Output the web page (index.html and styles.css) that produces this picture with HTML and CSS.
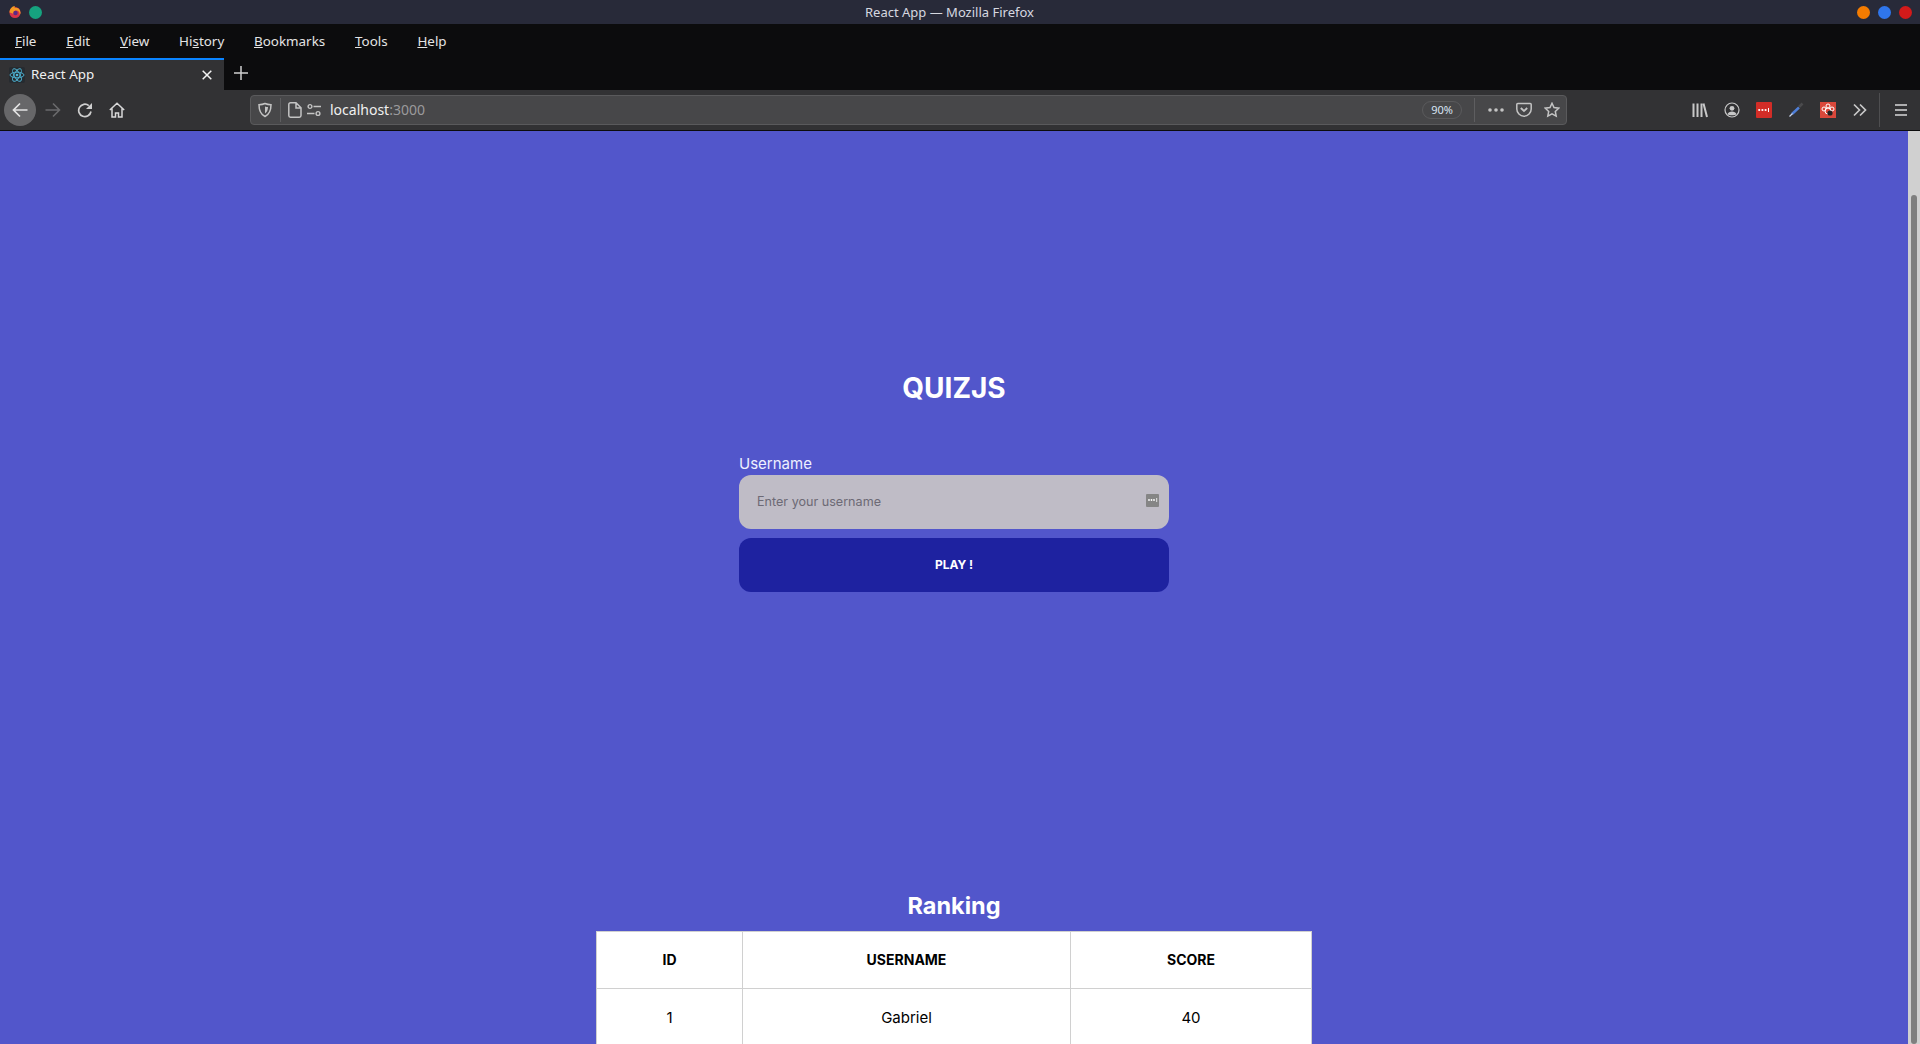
FILE: index.html
```html
<!DOCTYPE html>
<html lang="en">
<head>
    <meta charset="UTF-8">
    <title>React App — Mozilla Firefox</title>
    <link rel="stylesheet" href="styles.css">
</head>
<body>

    <!-- window title -->
    <div class="titlebar">
        <div class="title-left">
            <svg class="fx-logo" width="14" height="14" viewBox="0 0 14 14">
                <circle cx="7" cy="7.5" r="5.5" fill="#d8344a"/>
                <path d="M1.5 7.5C1.5 4 4 1 7 1c-.6 1-.5 1.6 0 2 2-.6 5 .6 5.5 4.5.1 1-.3 1.5-.8 2.2C12 6 9 5 7.5 5.5 6 6 5 7 5.5 8.5 3.5 8.5 2.5 7 1.5 7.5z" fill="#f59a23"/>
                <circle cx="7.5" cy="8" r="2.2" fill="#5b2a86"/>
            </svg>
            <span class="dot dot-green"></span>
        </div>
        <div class="title-text">React App — Mozilla Firefox</div>
        <div class="title-right">
            <span class="dot dot-orange"></span>
            <span class="dot dot-blue"></span>
            <span class="dot dot-red"></span>
        </div>
    </div>

    <!-- menu -->
    <nav class="menubar">
        <a><u>F</u>ile</a>
        <a><u>E</u>dit</a>
        <a><u>V</u>iew</a>
        <a>Hi<u>s</u>tory</a>
        <a><u>B</u>ookmarks</a>
        <a><u>T</u>ools</a>
        <a><u>H</u>elp</a>
    </nav>

    <!-- tabs -->
    <div class="tabstrip">
        <div class="tab">
            <span class="favicon">
                <svg width="16" height="16" viewBox="0 0 16 16" fill="none" stroke="#4fb6d6" stroke-width="0.9">
                    <ellipse cx="8" cy="8" rx="7" ry="2.8"/>
                    <ellipse cx="8" cy="8" rx="7" ry="2.8" transform="rotate(60 8 8)"/>
                    <ellipse cx="8" cy="8" rx="7" ry="2.8" transform="rotate(120 8 8)"/>
                    <circle cx="8" cy="8" r="1.3" fill="#4fb6d6" stroke="none"/>
                </svg>
            </span>
            <span class="tab-title">React App</span>
            <svg class="tab-close" width="10" height="10" viewBox="0 0 10 10" stroke="#f4f4f4" stroke-width="1.5">
                <path d="M.7.7l8.6 8.6M9.3.7L.7 9.3"/>
            </svg>
        </div>
        <svg class="new-tab" width="14" height="14" viewBox="0 0 14 14" stroke="#d0d0d0" stroke-width="1.5">
            <path d="M7 0v14M0 7h14"/>
        </svg>
    </div>

    <!-- toolbar -->
    <div class="toolbar">
        <div class="nav-btns">
            <button class="back-btn">
                <svg width="16" height="16" viewBox="0 0 16 16" fill="none" stroke="#e4e4e4" stroke-width="1.7">
                    <path d="M15.5 8H1.5M8 1.5L1.5 8 8 14.5"/>
                </svg>
            </button>
            <button class="plain-btn">
                <svg width="16" height="16" viewBox="0 0 16 16" fill="none" stroke="#6a6a6c" stroke-width="1.6">
                    <path d="M.5 8h14M8 1.5L14.5 8 8 14.5"/>
                </svg>
            </button>
            <button class="plain-btn">
                <svg width="16" height="16" viewBox="0 0 16 16" fill="none" stroke="#cfcfcf" stroke-width="1.7">
                    <path d="M14 9.5A6.2 6.2 0 1 1 11.8 3.6"/>
                    <path d="M15 1v6H9z" fill="#cfcfcf" stroke="none"/>
                </svg>
            </button>
            <button class="plain-btn">
                <svg width="16" height="16" viewBox="0 0 16 16" fill="none" stroke="#d8d8d8" stroke-width="1.5">
                    <path d="M.8 8L8 1.2 15.2 8M3 6.5V15h3.5v-4h3v4H13V6.5"/>
                </svg>
            </button>
        </div>

        <div class="urlbar">
            <svg class="url-shield" width="16" height="16" viewBox="0 0 16 16" fill="none" stroke="#c4c4c4" stroke-width="1.5">
                <path d="M8 1.5c2 .9 4 1.2 6 1.2 0 5.5-1.5 9.5-6 11.8C3.5 12.2 2 8.2 2 2.7c2 0 4-.3 6-1.2z"/>
                <path d="M8 4.5c1 .4 2 .6 3 .6-.1 3-1 5.2-3 6.5z" fill="#c4c4c4" stroke="none"/>
            </svg>
            <span class="url-sep"></span>
            <svg width="14" height="16" viewBox="0 0 14 16" fill="none" stroke="#c4c4c4" stroke-width="1.5">
                <path d="M2.5.8H8l5 5v7.7a1.7 1.7 0 0 1-1.7 1.7H2.5a1.7 1.7 0 0 1-1.7-1.7v-11A1.7 1.7 0 0 1 2.5.8zM8 1v5h5"/>
            </svg>
            <svg class="url-perm" width="14" height="14" viewBox="0 0 14 14" fill="none" stroke="#c4c4c4" stroke-width="1.4">
                <circle cx="3" cy="3.5" r="1.9"/>
                <path d="M6.5 3.5H14M0 10.5h7.5"/>
                <circle cx="11" cy="10.5" r="1.9"/>
            </svg>
            <span class="url-text">localhost<span class="url-port">:3000</span></span>
            <span class="url-zoom">90%</span>
            <span class="url-sep url-sep-right"></span>
            <svg class="url-action" width="16" height="16" viewBox="0 0 16 16" fill="#c4c4c4">
                <circle cx="2" cy="8" r="1.8"/>
                <circle cx="8" cy="8" r="1.8"/>
                <circle cx="14" cy="8" r="1.8"/>
            </svg>
            <svg class="url-action" width="16" height="16" viewBox="0 0 16 16" fill="none" stroke="#c4c4c4" stroke-width="1.5">
                <path d="M1.8 1.5h12.4a1 1 0 0 1 1 1V7a7.2 7.2 0 0 1-14.4 0V2.5a1 1 0 0 1 1-1z"/>
                <path d="M4.8 6L8 9l3.2-3" stroke-width="1.8"/>
            </svg>
            <svg class="url-action" width="16" height="16" viewBox="0 0 16 16" fill="none" stroke="#c4c4c4" stroke-width="1.5">
                <path d="M8 1.3l2 4.3 4.7.6-3.4 3.2.9 4.7L8 11.8l-4.2 2.3.9-4.7-3.400-3.200L6 5.600z"/>
            </svg>
        </div>

        <div class="tool-icons">
            <svg width="16" height="16" viewBox="0 0 16 16" fill="none" stroke="#c8c8c8" stroke-width="2">
                <path d="M1.5 1.5V15M5.5 1.5V15M9.5 1.5V15M11.5 1.5L15 15"/>
            </svg>
            <svg width="16" height="16" viewBox="0 0 16 16" fill="none" stroke="#c8c8c8" stroke-width="1.2">
                <circle cx="8" cy="8" r="7"/>
                <circle cx="8" cy="6.3" r="2.4" fill="#c8c8c8" stroke="none"/>
                <path d="M3.5 12.3c.6-2 2.5-2.8 4.5-2.8s3.900.8 4.500 2.800C11 13.700 5 13.700 3.500 12.300z" fill="#c8c8c8" stroke="none"/>
            </svg>
            <svg width="16" height="16" viewBox="0 0 16 16">
                <rect width="16" height="16" rx="1" fill="#d32d27"/>
                <circle cx="3.2" cy="8" r="1.1" fill="#fff"/>
                <circle cx="6.4" cy="8" r="1.1" fill="#fff"/>
                <circle cx="9.6" cy="8" r="1.1" fill="#fff"/>
                <path d="M12.5 6v4" stroke="#fff" stroke-width="1"/>
            </svg>
            <svg width="16" height="16" viewBox="0 0 16 16" fill="none">
                <path d="M11 5.5L4 12" stroke="#4f7fd8" stroke-width="2.4"/>
                <path d="M4.5 11.5l-3 3" stroke="#c8d4ec" stroke-width="1.2"/>
                <path d="M11 5l3.5-3.5" stroke="#4a4a4c" stroke-width="2.6"/>
            </svg>
            <svg width="16" height="16" viewBox="0 0 16 16">
                <rect width="16" height="16" fill="#d9483b"/>
                <g fill="none" stroke="#fff" stroke-width="1">
                    <circle cx="8" cy="4" r="2"/>
                    <circle cx="4" cy="7" r="2"/>
                    <circle cx="12" cy="7" r="2"/>
                    <circle cx="8" cy="9" r="3"/>
                </g>
                <circle cx="10" cy="11" r="2.6" fill="#222"/>
            </svg>
            <svg width="16" height="14" viewBox="0 0 14 14" fill="none" stroke="#c8c8c8" stroke-width="1.7">
                <path d="M1 1.5L6.5 7 1 12.5M7 1.5L12.5 7 7 12.5"/>
            </svg>
            <span class="tool-sep"></span>
            <svg class="burger" width="14" height="14" viewBox="0 0 14 14" stroke="#d8d8d8" stroke-width="1.7">
                <path d="M1 2h12M1 7h12M1 12h12"/>
            </svg>
        </div>
    </div>

    <!-- page -->
    <div class="viewport">
        <main class="page">
            <h1 class="logo">QUIZJS</h1>

            <form class="login-form">
                <label class="field-label" for="username">Username</label>
                <div class="input-wrap">
                    <input id="username" class="text-input" type="text" placeholder="Enter your username">
                    <span class="lp-icon">
                        <svg width="13" height="13" viewBox="0 0 13 13">
                            <rect width="13" height="13" rx="1" fill="#858585"/>
                            <circle cx="3" cy="6" r=".9" fill="#fff"/>
                            <circle cx="5.5" cy="6" r=".9" fill="#fff"/>
                            <circle cx="8" cy="6" r=".9" fill="#fff"/>
                            <path d="M10.7 4v4" stroke="#fff" stroke-width=".8"/>
                        </svg>
                    </span>
                </div>
                <button class="play-btn" type="button">PLAY !</button>
            </form>

            <h2 class="ranking-title">Ranking</h2>
            <table class="ranking">
                <thead>
                    <tr><th class="col-id">ID</th><th class="col-name">USERNAME</th><th class="col-score">SCORE</th></tr>
                </thead>
                <tbody>
                    <tr><td>1</td><td>Gabriel</td><td>40</td></tr>
                </tbody>
            </table>
        </main>
        <div class="scrollbar"><div class="scroll-thumb"></div></div>
    </div>

</body>
</html>
```

FILE: styles.css
```css
/* --- base --- */
* {
    box-sizing: border-box;
}

html, body {
    height: 100%;
}

body {
    margin: 0;
    display: flex;
    flex-direction: column;
    overflow: hidden;
    font-family: "Noto Sans", sans-serif;
    background-color: #5256cb;
}

/* --- title bar --- */
.titlebar {
    height: 24px;
    background-color: #282a39;
    color: #d6d8e0;
    font-size: 13px;
    display: flex;
    align-items: center;
    justify-content: space-between;
    padding: 0 8px;
}

.title-left,
.title-right {
    display: flex;
    align-items: center;
    gap: 8px;
}

.title-left {
    gap: 7px;
}

.title-text {
    flex: 1;
    text-align: center;
}

.dot {
    width: 13px;
    height: 13px;
    border-radius: 50%;
}

.dot-green { background-color: #16a37f; }
.dot-orange { background-color: #f57c00; }
.dot-blue { background-color: #2f76ec; }
.dot-red { background-color: #d41a1a; }

/* --- menu bar --- */
.menubar {
    height: 34px;
    background-color: #0c0c0d;
    color: #e4e4e4;
    font-size: 13.4px;
    display: flex;
    align-items: center;
    gap: 29.8px;
    padding: 0 0 1px 15px;
}

/* --- tabs --- */
.tabstrip {
    height: 32px;
    background-color: #0c0c0d;
    display: flex;
    align-items: center;
}

.tab {
    width: 224px;
    height: 32px;
    background-color: #323234;
    border-top: 2px solid #0a84ff;
    color: #f0f0f0;
    font-size: 13.4px;
    display: flex;
    align-items: center;
    padding: 0 12px 0 9px;
}

.favicon {
    width: 16px;
    height: 16px;
    display: flex;
    margin-right: 6px;
    background-color: #262b30;
    border-radius: 2px;
}

.tab-title {
    flex: 1;
    padding-bottom: 3px;
}

.new-tab {
    margin: 0 0 2px 10px;
}

/* --- toolbar --- */
.toolbar {
    height: 41px;
    background-color: #323234;
    border-bottom: 1px solid #0c0c0d;
    display: flex;
    align-items: center;
}

.nav-btns {
    width: 250px;
    display: flex;
    align-items: center;
    padding-left: 4px;
}

.nav-btns button {
    border: 0;
    padding: 0;
    background: none;
    display: flex;
    align-items: center;
    justify-content: center;
}

.nav-btns .back-btn {
    width: 32px;
    height: 32px;
    margin-right: 1px;
    border-radius: 50%;
    background-color: #676769;
}

.plain-btn {
    width: 32px;
    height: 32px;
}

.urlbar {
    width: 1317px;
    height: 30px;
    background-color: #474749;
    border: 1px solid #5a5a5c;
    border-radius: 4px;
    display: flex;
    align-items: center;
    padding: 0 6px;
    font-size: 14px;
    color: #f0f0f0;
}

.url-sep {
    width: 1px;
    height: 24px;
    background-color: #5e5e60;
    margin: 0 7px;
}

.url-perm {
    margin-left: 5px;
}

.url-text {
    margin-left: 9px;
    padding-bottom: 1px;
    flex: 1;
}

.url-port {
    color: #9a9a9c;
}

.url-zoom {
    width: 40px;
    height: 18px;
    border: 1px solid #5a5a5c;
    border-radius: 9px;
    font-size: 11px;
    line-height: 16px;
    text-align: center;
    color: #d8e4f4;
    margin-right: 12px;
}

.url-sep-right {
    margin: 0 9px 0 0;
}

.url-action {
    margin-left: 12px;
}

.url-sep-right + .url-action {
    margin-left: 4px;
}

.tool-icons {
    flex: 1;
    display: flex;
    align-items: center;
    gap: 16px;
    padding-left: 125px;
}

.tool-sep {
    width: 1px;
    height: 34px;
    background-color: #4e4e50;
    margin-left: -5px;
}

.burger {
    margin-left: -2px;
}

/* --- page --- */
.viewport {
    flex: 1;
    display: flex;
    min-height: 0;
    overflow: hidden;
}

.page {
    flex: 1;
    display: flex;
    flex-direction: column;
    align-items: center;
    padding-top: 236px;
    font-family: "Inter", sans-serif;
    color: #fff;
}

.logo {
    margin: 0;
    font-size: 28px;
    line-height: 42px;
    font-weight: 700;
}

.login-form {
    width: 430px;
    margin-top: 44px;
    display: flex;
    flex-direction: column;
}

.field-label {
    font-size: 15px;
    line-height: 22px;
    color: #eef0ff;
}

.input-wrap {
    position: relative;
    height: 54px;
}

.text-input {
    width: 100%;
    height: 54px;
    border: 0;
    border-radius: 12px;
    background-color: #bfbcc6;
    padding: 0 18px 1px;
    font-family: inherit;
    font-size: 12.6px;
}

.text-input::placeholder {
    color: #6d6a75;
    opacity: 1;
}

.lp-icon {
    position: absolute;
    right: 10px;
    top: 19px;
    display: flex;
}

.play-btn {
    height: 54px;
    margin-top: 9px;
    padding-bottom: 3px;
    border: 0;
    border-radius: 12px;
    background-color: #1e22a0;
    color: #fff;
    font-family: inherit;
    font-size: 12px;
    font-weight: 700;
}

.ranking-title {
    margin: 297px 0 0;
    font-size: 23.5px;
    line-height: 34px;
    font-weight: 700;
}

/* --- ranking table --- */
.ranking {
    width: 715px;
    margin-top: 8px;
    border-collapse: collapse;
    table-layout: fixed;
    background-color: #fff;
    color: #000;
    font-size: 15px;
}

.ranking th,
.ranking td {
    border: 1px solid #d0d0d0;
    text-align: center;
    height: 57px;
    padding: 0;
}

.ranking th {
    padding-bottom: 2px;
    font-size: 14px;
    font-weight: 700;
}

.col-id { width: 146px; }
.col-name { width: 328px; }
.col-score { width: 241px; }

/* --- scrollbar --- */
.scrollbar {
    width: 12px;
    background-color: #d0d0d0;
    padding: 64px 3px 0;
}

.scroll-thumb {
    height: 100%;
    background-color: #7f7f7f;
    border-radius: 3px;
}
```
